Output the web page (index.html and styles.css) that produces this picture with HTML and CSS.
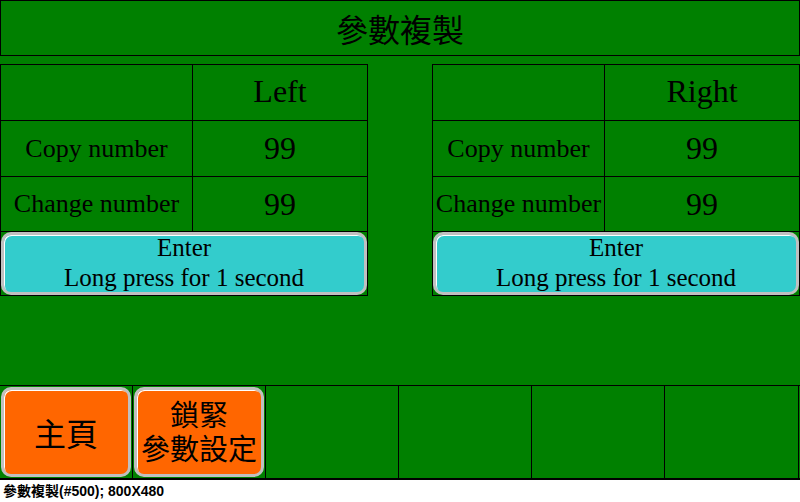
FILE: index.html
```html
<!DOCTYPE html>
<html>
<head>
<meta charset="utf-8">
<link rel="stylesheet" href="styles.css">
</head>
<body>
<div class="screen">
  <div class="header">參數複製</div>
  <div class="middle">
    <div class="table table-left">
      <div class="cell"></div>
      <div class="cell head">Left</div>
      <div class="cell label">Copy number</div>
      <div class="cell value">99</div>
      <div class="cell label">Change number</div>
      <div class="cell value">99</div>
      <div class="cell span"><div class="btn cyan">Enter<br>Long press for 1 second</div></div>
    </div>
    <div class="table table-right">
      <div class="cell"></div>
      <div class="cell head">Right</div>
      <div class="cell label">Copy number</div>
      <div class="cell value">99</div>
      <div class="cell label">Change number</div>
      <div class="cell value">99</div>
      <div class="cell span"><div class="btn cyan">Enter<br>Long press for 1 second</div></div>
    </div>
  </div>
  <div class="bottombar">
    <div class="bcell"><div class="btn orange big">主頁</div></div>
    <div class="bcell"><div class="btn orange two"><span class="line">鎖緊</span><span class="line">參數設定</span></div></div>
    <div class="bcell"></div>
    <div class="bcell"></div>
    <div class="bcell"></div>
    <div class="bcell"></div>
  </div>
</div>
<div class="status">參數複製(#500); 800X480</div>
</body>
</html>
```
FILE: styles.css
```css
* { box-sizing: border-box; }
html, body { margin: 0; padding: 0; background: #ffffff; }
body { width: 800px; height: 502px; overflow: hidden; }

.screen {
  width: 800px;
  height: 480px;
  background: #008000;
  display: flex;
  flex-direction: column;
  color: #000;
  font-family: "Liberation Serif", "Noto Sans CJK TC", serif;
}

.header {
  height: 56px;
  border: 1px solid #000;
  display: flex;
  align-items: center;
  justify-content: center;
  font-family: "Noto Sans CJK TC", sans-serif;
  font-size: 32px;
  line-height: 36px;
}

.middle {
  margin-top: 8px;
  display: flex;
  justify-content: space-between;
}

.table {
  width: 368px;
  display: grid;
  grid-template-rows: 56px 56px 55px 64px;
  border-top: 1px solid #000;
  border-left: 1px solid #000;
}
.table-left { grid-template-columns: 192px 175px; }
.table-right { grid-template-columns: 172px 195px; }

.cell {
  border-right: 1px solid #000;
  border-bottom: 1px solid #000;
  display: flex;
  align-items: center;
  justify-content: center;
  white-space: nowrap;
}
.head { font-size: 32px; padding-bottom: 2px; }
.label { font-size: 26px; }
.value { font-size: 32px; }
.span { grid-column: 1 / 3; align-items: stretch; justify-content: stretch; }

.btn {
  flex: 1;
  border: 3px solid #c0c0c0;
  border-radius: 10px;
  box-shadow: inset 1px 1px 0 #ffffff;
  display: flex;
  flex-direction: column;
  align-items: center;
  justify-content: center;
  text-align: center;
}
.cyan {
  background: #33cccc;
  font-size: 25px;
  line-height: 30px;
  padding-bottom: 1px;
}
.orange {
  background: #ff6600;
  font-family: "Noto Sans CJK TC", sans-serif;
  margin: 1px;
}
.big { font-size: 32px; }
.two { font-size: 29px; padding-bottom: 4px; }
.line { display: block; line-height: 34px; white-space: nowrap; }

.bottombar {
  margin-top: auto;
  height: 95px;
  display: grid;
  grid-template-columns: repeat(5, 133px) 134px;
  border-top: 1px solid #000;
  border-bottom: 2px solid #000;
}
.bcell {
  border-right: 1px solid #000;
  display: flex;
}

.status {
  height: 22px;
  padding-left: 3px;
  font-family: "Liberation Sans", "Noto Sans CJK TC", sans-serif;
  font-weight: bold;
  font-size: 14px;
  line-height: 22px;
  color: #000;
}
```
